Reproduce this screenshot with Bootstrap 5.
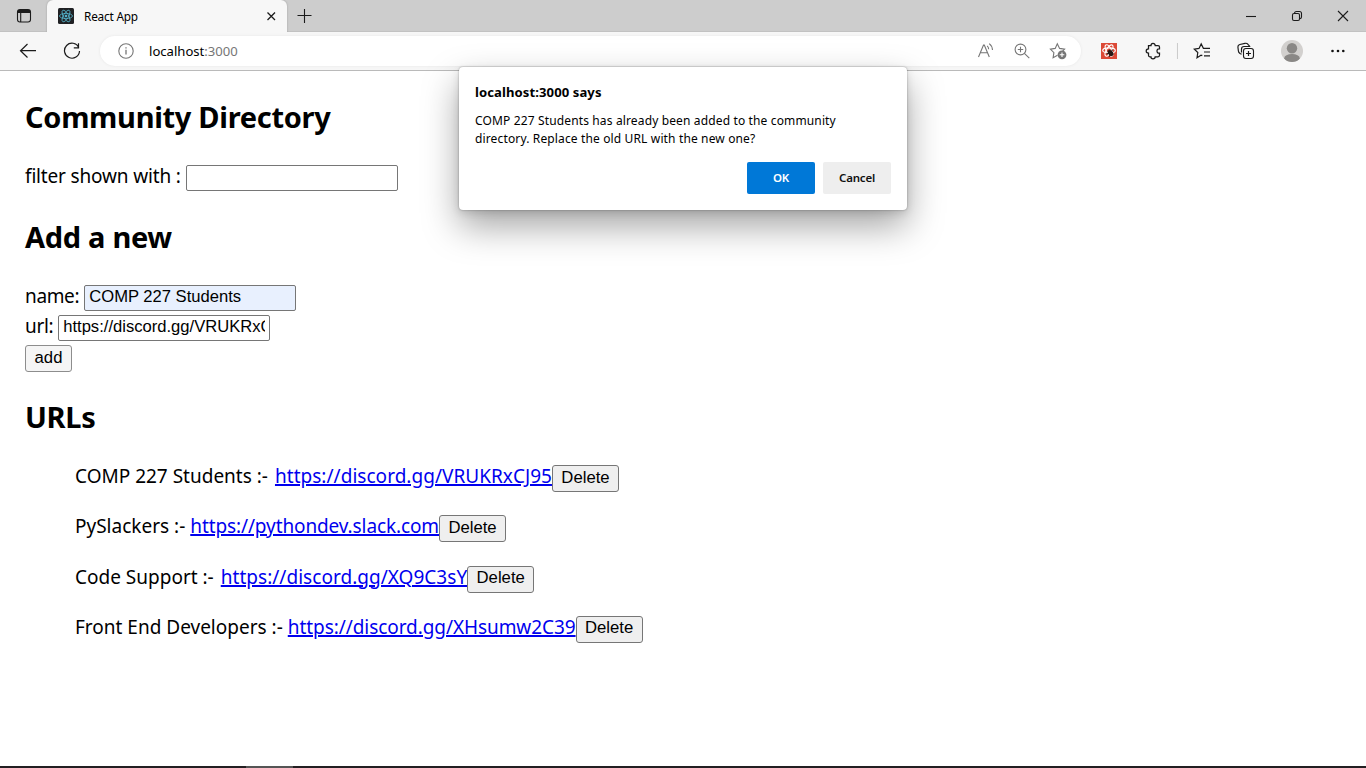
<!DOCTYPE html>
<html lang="en">
<head>
<meta charset="utf-8">
<meta name="viewport" content="width=device-width, initial-scale=1">
<title>React App</title>
<link href="https://cdn.jsdelivr.net/npm/bootstrap@5.3.0/dist/css/bootstrap.min.css" rel="stylesheet">
<style>
body{font-family:"Noto Sans","Open Sans",sans-serif;color:#000;background:#fff;width:1366px;height:768px;overflow:hidden}
svg{display:block;flex:none;fill:none;stroke:#1b1b1b;stroke-width:1.1}
.tabstrip{height:32px;background:#cdcdcd;border-bottom:1px solid #c2c2c2}
.side-btn{width:47px;padding-left:16px}
.browser-tab{width:240px;height:32px;margin-bottom:-1px;background:#f7f7f7;border-radius:6px 6px 0 0;padding:0 10px 0 11px;box-shadow:0 0 2px #999;clip-path:inset(0 -3px 0 -3px)}
.tab-title{font-size:11.8px;letter-spacing:-.2px;line-height:16px;margin-left:10px;padding-bottom:1px}
.winctl{gap:30px;padding-right:17px}
.toolbar-row{height:39px;background:#f7f7f7;border-bottom:1px solid #bababa;padding-left:19px}
.address{width:981px;height:30px;margin-left:19px;background:#fff;border-radius:15px;box-shadow:0 0 3px #e6e6e6;padding:0 13px 0 18px}
.address svg{stroke:#767676}
.host{font-size:13.1px;letter-spacing:0;margin-left:15px;line-height:18px;padding-bottom:1px}
.host span{color:#767676}
.page{height:695px;padding:26px 25px 0;font-size:19px;line-height:30px}
.page h2{font-size:29px;font-weight:700;line-height:40px;height:40px;margin:0;letter-spacing:-.3px}
.page .gap-block{margin-bottom:25px}
.field{height:30px}
.field label{white-space:nowrap;margin-right:5px;letter-spacing:-.16px;line-height:28px}
.field input{width:212px;height:26px;border:1px solid #767676;border-radius:2px;padding:0 4px 2px 4px;font:16.6px/20px "Liberation Sans",Arial,sans-serif;color:#000;background:#fff;margin-top:3px}
.field input.filled{background:#e8f0fe}
.native{height:27px;border:1px solid #767676;border-radius:3px;background:#efefef;padding:0 0 2px;width:67px;font:16.7px/22px "Liberation Sans",Arial,sans-serif;color:#000}
.add-btn{width:47px;margin-top:3px;background:#f5f5f5;border-color:#8d8d8d;display:block}
.entry .field label{letter-spacing:-.35px}
.urls{margin:25px 0 0;padding:0 0 0 50px;list-style:none}
.urls li{height:50.3px;white-space:nowrap}
.urls li>span,.urls a{line-height:28px}
.urls li>span{margin-right:7px}
.urls a{color:#0000ee;text-underline-offset:1px;text-decoration-thickness:2px}
.urls li:nth-child(odd) a{letter-spacing:.03px}
.urls li:nth-child(2) a{letter-spacing:-.11px}
.urls li:nth-child(4) a{letter-spacing:-.07px}
.urls li:nth-child(even)>span{margin-right:5px}
.urls .native{margin-top:3px}
.prompt{position:absolute;left:459px;top:67px;width:448px;height:143px;background:#fff;border-radius:4px;padding:16px;box-shadow:0 0 2px rgba(0,0,0,.35),0 16px 36px rgba(0,0,0,.36),0 3px 8px rgba(0,0,0,.12)}
.prompt strong{font-size:13.1px;line-height:19px;letter-spacing:.08px}
.prompt p{font-size:12px;letter-spacing:.14px;line-height:18px;margin:10px 0 14px;white-space:nowrap}
.prompt button{width:68px;height:32px;border:0;border-radius:2px;font-size:11.5px;font-weight:600;padding:0;background:#eee;color:#111;letter-spacing:-.2px}
.prompt button.ok{background:#0078d7;color:#fff}
.taskbar{height:2px;background:#231f22}
.taskbar i{display:block;width:47px;height:2px;margin-left:246px;background:#555}
</style>
<script src="https://cdn.jsdelivr.net/npm/bootstrap@5.3.0/dist/js/bootstrap.bundle.min.js"></script>
</head>
<body class="d-flex flex-column">
<header>
<div class="tabstrip d-flex">
  <div class="side-btn d-flex align-items-center"><svg width="16" height="16"><rect x="1.5" y="1.5" width="13" height="12.5" rx="2.5"/><path d="M2 3.5H14" stroke-width="3"/><path d="M4.7 5V14"/></svg></div>
  <div class="browser-tab d-flex align-items-center">
    <svg width="16" height="16" style="stroke:#54b5cc;stroke-width:.8"><rect width="16" height="16" rx="1.5" fill="#202124" stroke="none"/><g><ellipse cx="8" cy="8" rx="6.5" ry="2.6"/><ellipse cx="8" cy="8" rx="6.5" ry="2.6" transform="rotate(60 8 8)"/><ellipse cx="8" cy="8" rx="6.5" ry="2.6" transform="rotate(120 8 8)"/><circle cx="8" cy="8" r="1" fill="#61dafb"/></g></svg>
    <span class="tab-title">React App</span>
    <svg class="ms-auto" width="12" height="12"><path d="M2.5 2.5l7.5 7.5M10 2.5L2.5 10" stroke-width="1.3"/></svg>
  </div>
  <div class="d-flex align-items-center ps-2 ms-1"><svg width="16" height="16" style="margin-left:-3px"><path d="M8.5 1v14M1.5 7.5h14" /></svg></div>
  <div class="winctl d-flex align-items-center ms-auto">
    <svg width="16" height="16"><path d="M3 8.5h10"/></svg>
    <svg width="16" height="16"><rect x="3.5" y="5.5" width="7" height="7" rx="1.5"/><path d="M5.5 5.5Q5.5 3.5 7.5 3.5H10.5Q12.5 3.5 12.5 5.5V9Q12.5 10.5 11 10.6"/></svg>
    <svg width="16" height="16" style="margin-right:-2px"><path d="M3 3l10 10M13 3l-10 10"/></svg>
  </div>
</div>
<div class="toolbar-row d-flex align-items-center">
  <svg width="18" height="18"><path d="M17 8.7H1.5M8.5 2L1.5 8.7l7 6.8" stroke-width="1.2"/></svg>
  <svg width="18" height="18" style="margin-left:26px"><path d="M15.8 5.5A7.5 7.5 0 1 0 16.5 9M15.5 1.3v4.6h-4.7" stroke-width="1.2"/></svg>
  <div class="address d-flex align-items-center">
    <svg width="16" height="16"><circle cx="8" cy="8" r="7.2"/><path d="M8 6.8v4.6M8 4.3v1.3" stroke-width="1.3"/></svg>
    <span class="host">localhost<span>:3000</span></span>
    <svg class="ms-auto" width="18" height="18"><path d="M1.5 15L6.5 3h.8l5 12M3.3 10.8h7.2M10.2 3.8q1.4 1.3 1.5 3.4M12.2 1.6q3 2.2 3.3 6.4"/></svg>
    <svg width="18" height="18" style="margin-left:18px"><circle cx="7.5" cy="7.5" r="5.4"/><path d="M11.4 11.4l4.9 4.8M7.5 4.8v5.4M4.8 7.5h5.4"/></svg>
    <svg width="19" height="18" style="margin-left:18px"><path d="M8.5 13.3l-4.4 2.5.8-5.1-3.5-3.5 4.8-.8L8.3 1.8l2.3 4.6 5 .8-2 2"/><circle cx="13" cy="12.8" r="4.4" fill="#767676" stroke="none"/><path d="M13 10.5v4.6M10.7 12.8h4.6" stroke="#fff"/></svg>
  </div>
  <svg width="16" height="16" style="margin-left:20px;stroke:#fff;stroke-width:1.1"><rect width="16" height="16" fill="#dc4936" stroke="none"/><ellipse cx="8" cy="7.5" rx="6.3" ry="2.6"/><ellipse cx="8" cy="7.5" rx="6.3" ry="2.6" transform="rotate(60 8 7.5)"/><ellipse cx="8" cy="7.5" rx="6.3" ry="2.6" transform="rotate(120 8 7.5)"/><path d="M6.5 8l2-1.5 3.5 2.5 .7 2.5-1.7 1.8-2.5-.8-1.5-2z" fill="#291915" stroke="none"/><path d="M5.5 11l3-1M8 13.5l2-2M11.5 6.5l-1.5 3" stroke="#291915"/></svg>
  <svg width="18" height="18" style="margin-left:28px"><path d="M3.5 3.5H6Q6 1.3 8 1.3T10.2 3.5H13Q14.5 3.5 14.5 5V6.8Q12 6.5 12 9T14.5 11.2V13Q14.5 14.8 13 14.8H10.2Q10.2 16.8 8 16.8T6 14.8H4.8Q3.5 14.8 3.5 13.3V11Q1.2 11 1.2 9T3.5 6.9Z" stroke-width="1.25"/></svg>
  <svg width="2" height="16" style="margin-left:13px;stroke:#ccc"><path d="M1.5 0v16"/></svg>
  <svg width="18" height="18" style="margin-left:15px"><path d="M8.3 13.1L4 15.7l.8-5.2-3.5-3.3L6 6.4l2.2-4.5 2.2 4.4H17M11 10h6M11 13.8h6M8.3 13.1l1 .5" stroke-width="1.2"/></svg>
  <svg width="18" height="18" style="margin-left:26px"><rect x="6.5" y="6.5" width="10" height="10" rx="2.4"/><path d="M11.5 9v5M9 11.5h5M4.6 12.3L3 11.5Q1.5 10.5 1.4 9L.9 5Q.8 3 2.8 2.5L8 1.3Q10 1 11 2.3L12.7 4.3M4.5 10.5V7Q4.5 4.5 7 4.5h6.3" stroke-width="1.2"/></svg>
  <svg width="22" height="22" style="margin-left:26px;stroke:none"><defs><clipPath id="face"><circle cx="11" cy="11" r="11"/></clipPath></defs><circle cx="11" cy="11" r="11" fill="#d2d0ce"/><g clip-path="url(#face)" fill="#8a8886"><circle cx="11" cy="8.3" r="5.2"/><ellipse cx="11" cy="18.3" rx="7.8" ry="4.2"/></g></svg>
  <svg width="16" height="6" style="margin-left:27px;fill:#111;stroke:none"><circle cx="2.5" cy="3" r="1.3"/><circle cx="8" cy="3" r="1.3"/><circle cx="13.3" cy="3" r="1.3"/></svg>
</div>
</header>
<main class="page">
  <h2 class="gap-block">Community Directory</h2>
  <div class="field d-flex gap-block"><label for="filter">filter shown with :</label><input id="filter"></div>
  <h2 class="gap-block">Add a new</h2>
  <form class="entry">
    <div class="field d-flex"><label for="name">name:</label><input id="name" class="filled" value="COMP 227 Students"></div>
    <div class="field d-flex"><label for="url">url:</label><input id="url" value="https://discord.gg/VRUKRxCJ95"></div>
    <button type="button" class="native add-btn">add</button>
  </form>
  <h2 style="margin-top:25px">URLs</h2>
  <ul class="urls">
    <li class="d-flex"><span>COMP 227 Students :-</span><a href="#">https://discord.gg/VRUKRxCJ95</a><button class="native">Delete</button></li>
    <li class="d-flex"><span>PySlackers :-</span><a href="#">https://pythondev.slack.com</a><button class="native">Delete</button></li>
    <li class="d-flex"><span>Code Support :-</span><a href="#">https://discord.gg/XQ9C3sY</a><button class="native">Delete</button></li>
    <li class="d-flex"><span>Front End Developers :-</span><a href="#">https://discord.gg/XHsumw2C39</a><button class="native">Delete</button></li>
  </ul>
</main>
<footer class="taskbar"><i></i></footer>
<div class="prompt" role="dialog">
  <strong class="d-block">localhost:3000 says</strong>
  <p>COMP 227 Students has already been added to the community<br>directory. Replace the old URL with the new one?</p>
  <div class="d-flex justify-content-end gap-2"><button class="ok">OK</button><button>Cancel</button></div>
</div>
</body>
</html>
